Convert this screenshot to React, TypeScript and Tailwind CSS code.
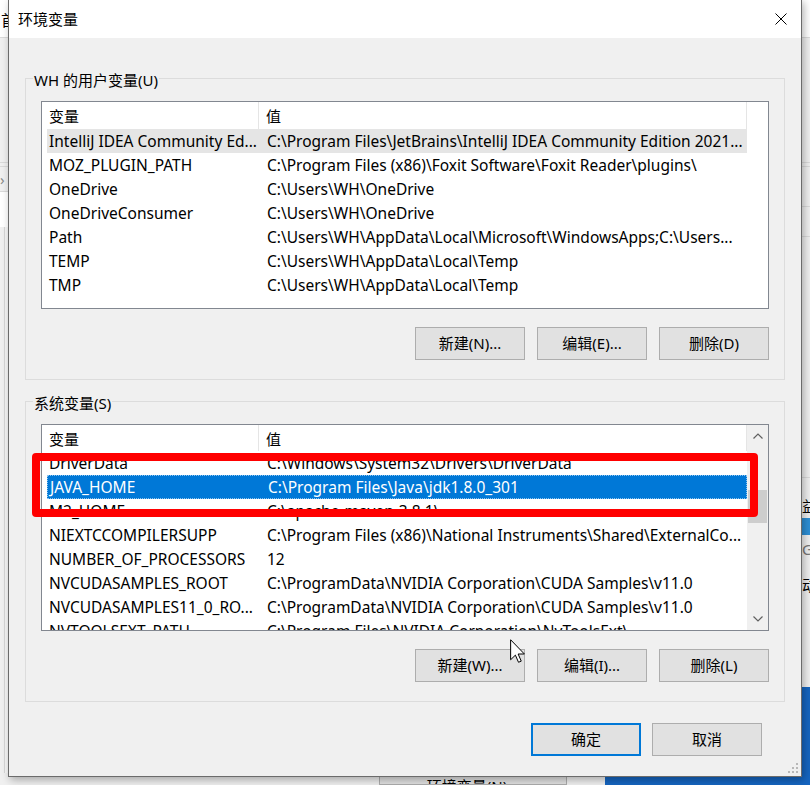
type Row = [string, string];

const USER_VARS: Row[] = [
  ["IntelliJ IDEA Community Ed...", "C:\\Program Files\\JetBrains\\IntelliJ IDEA Community Edition 2021..."],
  ["MOZ_PLUGIN_PATH", "C:\\Program Files (x86)\\Foxit Software\\Foxit Reader\\plugins\\"],
  ["OneDrive", "C:\\Users\\WH\\OneDrive"],
  ["OneDriveConsumer", "C:\\Users\\WH\\OneDrive"],
  ["Path", "C:\\Users\\WH\\AppData\\Local\\Microsoft\\WindowsApps;C:\\Users..."],
  ["TEMP", "C:\\Users\\WH\\AppData\\Local\\Temp"],
  ["TMP", "C:\\Users\\WH\\AppData\\Local\\Temp"],
];

const SYS_VARS: Row[] = [
  ["DriverData", "C:\\Windows\\System32\\Drivers\\DriverData"],
  ["JAVA_HOME", "C:\\Program Files\\Java\\jdk1.8.0_301"],
  ["M2_HOME", "C:\\apache-maven-3.8.1\\"],
  ["NIEXTCCOMPILERSUPP", "C:\\Program Files (x86)\\National Instruments\\Shared\\ExternalCo..."],
  ["NUMBER_OF_PROCESSORS", "12"],
  ["NVCUDASAMPLES_ROOT", "C:\\ProgramData\\NVIDIA Corporation\\CUDA Samples\\v11.0"],
  ["NVCUDASAMPLES11_0_RO...", "C:\\ProgramData\\NVIDIA Corporation\\CUDA Samples\\v11.0"],
  ["NVTOOLSEXT_PATH", "C:\\Program Files\\NVIDIA Corporation\\NvToolsExt\\"],
];

const WinButton = ({ label, primary }: { label: string; primary?: boolean }) => (
  <button
    className={
      primary
        ? "flex h-[33px] w-[110px] items-center justify-center border-2 border-[#0078d7] bg-[#e1e1e1] text-[15px] text-black"
        : "flex h-[33px] w-[110px] items-center justify-center border border-[#adadad] bg-[#e1e1e1] text-[15px] text-black"
    }
  >
    {label}
  </button>
);

const Chevron = ({ up }: { up?: boolean }) => (
  <svg width="10" height="6" viewBox="0 0 10 6">
    <path d={up ? "M0.5 5.5 L5 1 L9.5 5.5" : "M0.5 0.5 L5 5 L9.5 0.5"} fill="none" stroke="#606060" strokeWidth="1.2" />
  </svg>
);

const VarList = ({
  rows,
  height,
  headerH,
  hover,
  selected,
  scrollbar,
}: {
  rows: Row[];
  height: string;
  headerH: string;
  hover?: number;
  selected?: number;
  scrollbar?: boolean;
}) => (
  <div className={`mx-[15px] flex overflow-hidden border border-[#828790] bg-white ${height}`}>
    <div className="flex-1 overflow-hidden">
      <div className={`ml-[5px] flex w-[700px] text-[15px] ${headerH}`}>
        <div className="flex w-[212px] items-center border-r border-[#e5e5e5] pl-[2px] pt-[2px]">变量</div>
        <div className="flex flex-1 items-center border-r border-[#e5e5e5] pl-[7px] pt-[2px]">值</div>
      </div>
      {rows.map(([name, value], i) => (
        <div
          key={name + i}
          className={
            i === selected
              ? "ml-[5px] flex h-[24px] w-[700px] items-center border border-dotted border-[#8cc4f0] bg-[#0078d7] pt-[2px] text-[15.5px] text-white"
              : i === hover
                ? "ml-[5px] flex h-[24px] w-[700px] items-center bg-[#e5e5e5] pt-[2px] text-[15.5px]"
                : "ml-[5px] flex h-[24px] w-[700px] items-center pt-[2px] text-[15.5px]"
          }
        >
          <div className="w-[218px] overflow-hidden whitespace-nowrap pl-[2px]">{name}</div>
          <div className="flex-1 overflow-hidden whitespace-nowrap pl-[2px]">{value}</div>
        </div>
      ))}
    </div>
    {scrollbar && (
      <div className="flex w-[21px] flex-col items-center bg-[#f0f0f0]">
        <div className="flex h-[22px] items-center">
          <Chevron up />
        </div>
        <div className="mt-[43px] h-[33px] w-[19px] bg-[#cdcdcd]" />
        <div className="flex-1" />
        <div className="flex h-[22px] items-center">
          <Chevron />
        </div>
      </div>
    )}
  </div>
);

const Group = ({ title, children }: { title: string; children: React.ReactNode }) => (
  <fieldset className="mx-[16px] border border-[#dcdcdc] pb-[19px]">
    <legend className="ml-[7px] px-[1px] pt-[4px] text-[15px] leading-[20px]">{title}</legend>
    {children}
  </fieldset>
);

const Backdrop = () => (
  <>
    {/* window behind, left edge */}
    <div className="absolute left-0 top-0 flex h-full w-[8px] flex-col overflow-hidden bg-[#f0f0f0]">
      <div className="h-[38px] border-b border-[#dadada] bg-white pl-[1px] pt-[10px] text-[15px] leading-[20px] whitespace-nowrap">首</div>
      <div className="mt-[124px] h-[5px] border-y border-[#dadada]" />
      <div className="flex h-[24px] items-center text-[#8a8a8a]">›</div>
      <div className="h-[36px] border-t border-[#dadada] bg-white" />
      <div className="ml-[4px] flex-1 border-l border-[#d6d6d6] bg-[#f7f7f7]" />
    </div>
    {/* window behind, right edge */}
    <div className="absolute right-0 top-0 flex h-full w-[8px] flex-col overflow-hidden bg-[#f0f0f0] text-[15px] leading-[20px] whitespace-nowrap">
      <div className="h-[38px] border-b border-[#dadada] bg-white" />
      <div className="mt-[124px] h-[5px] border-y border-[#dadada]" />
      <div className="h-[40px] border-b border-[#dadada]" />
      <div className="h-[30px] border-b border-[#dadada]" />
      <div className="h-[241px] border-b border-[#dadada]" />
      <div className="h-[40px] pt-[18px] text-black">益</div>
      <div className="h-[17px] bg-[#2d8fd5]" />
      <div className="h-[28px] pt-[4px] text-[#777]">GB</div>
      <div className="h-[40px] pt-[12px] text-black">动</div>
      <div className="h-[84px]" />
      <div className="flex-1 bg-[#1565c0]" />
    </div>
    {/* below the dialog */}
    <div className="absolute bottom-0 left-0 flex h-[12px] w-full">
      <div className="w-[379px] bg-[#f0f0f0]" />
      <div className="flex w-[188px] justify-center overflow-hidden border border-[#adadad] bg-[#e1e1e1] pt-[2px] text-[15px] leading-[20px]">
        环境变量(N)...
      </div>
      <div className="w-[38px] bg-[#f0f0f0]" />
      <div className="flex-1 bg-[#1565c0]" />
    </div>
  </>
);

export default function App() {
  return (
    <div className="relative h-[785px] w-[810px] overflow-hidden bg-[#f0f0f0] font-['Noto_Sans','Noto_Sans_CJK_SC',sans-serif] text-[15px] text-black">
      <Backdrop />

      <div className="absolute left-[8px] top-[-1px] flex h-[778px] w-[794px] flex-col border border-[#6b6b6b] bg-[#f0f0f0] shadow-[2px_3px_8px_rgba(0,0,0,0.3)]">
        <div className="flex h-[38px] items-center justify-between bg-white pl-[9px] pr-[14px]">
          <span className="text-[15px]">环境变量</span>
          <svg width="12" height="12" viewBox="0 0 12 12">
            <path d="M0.5 0.5 L11.5 11.5 M11.5 0.5 L0.5 11.5" stroke="#000" strokeWidth="1" />
          </svg>
        </div>

        <div className="flex flex-1 flex-col pt-[28px]">
          <Group title="WH 的用户变量(U)">
            <div className="mt-[11px]">
              <VarList rows={USER_VARS} height="h-[208px]" headerH="h-[27px]" hover={0} />
            </div>
            <div className="mr-[15px] mt-[18px] flex justify-end gap-[12px]">
              <WinButton label="新建(N)..." />
              <WinButton label="编辑(E)..." />
              <WinButton label="删除(D)" />
            </div>
          </Group>

          <div className="mt-[9px]">
            <Group title="系统变量(S)">
              <div className="mt-[11px]">
                <VarList rows={SYS_VARS} height="h-[207px]" headerH="h-[26px]" selected={1} scrollbar />
              </div>
              <div className="mr-[15px] mt-[18px] flex justify-end gap-[12px]">
                <WinButton label="新建(W)..." />
                <WinButton label="编辑(I)..." />
                <WinButton label="删除(L)" />
              </div>
            </Group>
          </div>

          <div className="mr-[39px] mt-[21px] flex justify-end gap-[11px]">
            <WinButton label="确定" primary />
            <WinButton label="取消" />
          </div>
        </div>

        {/* resize grip */}
        <svg className="absolute bottom-[2px] right-[2px]" width="11" height="11" viewBox="0 0 11 11" fill="#b8b8b8">
          <rect x="8" y="0" width="2" height="2" />
          <rect x="4" y="4" width="2" height="2" />
          <rect x="8" y="4" width="2" height="2" />
          <rect x="0" y="8" width="2" height="2" />
          <rect x="4" y="8" width="2" height="2" />
          <rect x="8" y="8" width="2" height="2" />
        </svg>
      </div>

      {/* red annotation box around JAVA_HOME */}
      <div className="absolute left-[32px] top-[453px] h-[64px] w-[726px] rounded-[4px] border-[8px] border-[#ff0000]" />

      {/* mouse pointer */}
      <svg className="absolute left-[510px] top-[639px]" width="15" height="24" viewBox="0 0 12 19">
        <path d="M0.5 0.5 L0.5 16.5 L4.3 12.8 L6.8 18.5 L9 17.6 L6.5 11.9 L11.5 11.9 Z" fill="#fff" stroke="#000" strokeWidth="0.8" strokeLinejoin="miter" />
      </svg>
    </div>
  );
}
